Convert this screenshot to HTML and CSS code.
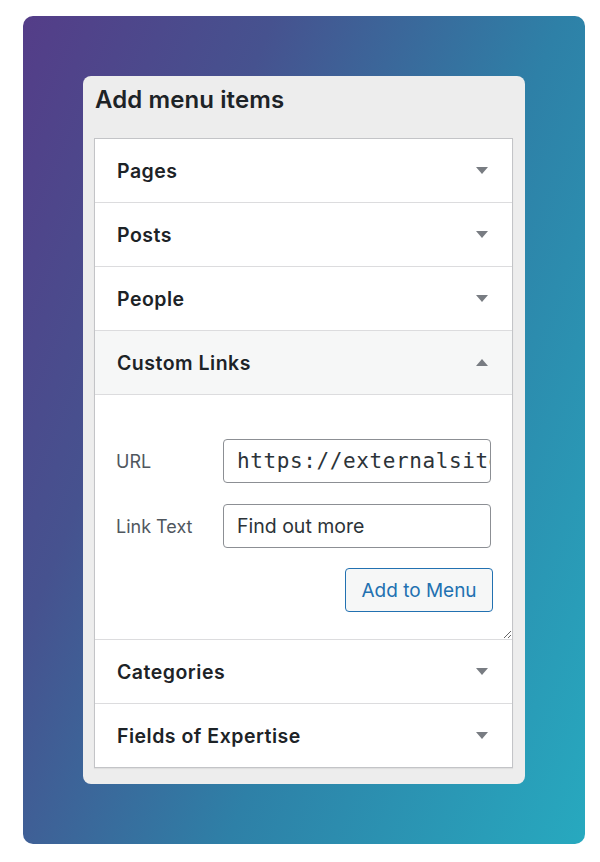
FILE: index.html
```html
<!DOCTYPE html>
<html lang="en">
<head>
<meta charset="utf-8">
<title>Add menu items</title>
<link rel="stylesheet" href="styles.css">
</head>
<body>
<div class="stage">
  <div class="panel">
    <h2 class="panel-title">Add menu items</h2>
    <div class="accordion">
      <div class="row">
        <span class="row-title">Pages</span>
        <svg class="arrow" width="12" height="7" viewBox="0 0 12 7"><polygon points="0,0 12,0 6,7"/></svg>
      </div>
      <div class="row">
        <span class="row-title">Posts</span>
        <svg class="arrow" width="12" height="7" viewBox="0 0 12 7"><polygon points="0,0 12,0 6,7"/></svg>
      </div>
      <div class="row">
        <span class="row-title">People</span>
        <svg class="arrow" width="12" height="7" viewBox="0 0 12 7"><polygon points="0,0 12,0 6,7"/></svg>
      </div>
      <div class="row row-open">
        <span class="row-title">Custom Links</span>
        <svg class="arrow" width="12" height="7" viewBox="0 0 12 7"><polygon points="0,7 12,7 6,0"/></svg>
      </div>
      <div class="custom">
        <div class="field">
          <label class="field-label">URL</label>
          <div class="input input-mono">https://externalsite.com</div>
        </div>
        <div class="field">
          <label class="field-label">Link Text</label>
          <div class="input">Find out more</div>
        </div>
        <div class="actions">
          <button class="button">Add to Menu</button>
        </div>
      </div>
      <div class="row">
        <span class="row-title">Categories</span>
        <svg class="arrow" width="12" height="7" viewBox="0 0 12 7"><polygon points="0,0 12,0 6,7"/></svg>
      </div>
      <div class="row row-last">
        <span class="row-title">Fields of Expertise</span>
        <svg class="arrow" width="12" height="7" viewBox="0 0 12 7"><polygon points="0,0 12,0 6,7"/></svg>
      </div>
    </div>
  </div>
</div>
</body>
</html>
```
FILE: styles.css
```css
html, body {
  margin: 0;
  padding: 0;
  background: #ffffff;
}

body {
  font-family: Inter, "Noto Sans", "Liberation Sans", sans-serif;
  color: #1d2327;
}

.stage {
  box-sizing: border-box;
  width: 562px;
  height: 828px;
  margin: 16px 0 0 23px;
  padding: 60px 60px 0 60px;
  border-radius: 10px;
  background: linear-gradient(112deg, #543d88 0%, #46528f 28%, #2e80a7 60%, #27a9bf 100%);
}

.panel {
  background: #ededed;
  border-radius: 8px;
  padding: 0 12px 16px 11px;
}

.panel-title {
  margin: 0;
  padding: 10px 0 24px 1px;
  font-size: 24px;
  line-height: 28px;
  font-weight: 600;
  color: #1d2327;
  letter-spacing: 0.1px;
}

.accordion {
  background: #ffffff;
  border: 1px solid #c3c4c7;
  box-shadow: 0 1px 1px rgba(0, 0, 0, 0.06);
}

.row {
  display: flex;
  align-items: center;
  justify-content: space-between;
  height: 63px;
  padding: 0 24px 0 22px;
  border-bottom: 1px solid #dcdcde;
}

.row-last {
  border-bottom: none;
}

.row-open {
  background: #f6f7f7;
}

.row-title {
  font-size: 19.5px;
  font-weight: 600;
  color: #1d2327;
  letter-spacing: 0.5px;
}

.arrow {
  fill: #787c82;
  display: block;
}

.custom {
  box-sizing: border-box;
  height: 245px;
  padding: 44px 21px 0 21px;
  border-bottom: 1px solid #dcdcde;
  display: flex;
  flex-direction: column;
  gap: 21px;
  resize: vertical;
  overflow: auto;
}

.field {
  display: flex;
  align-items: center;
}

.field-label {
  width: 107px;
  flex: none;
  font-size: 18px;
  color: #50575e;
}

.input {
  box-sizing: border-box;
  width: 268px;
  height: 44px;
  border: 1px solid #8c8f94;
  border-radius: 4px;
  padding: 0 13px;
  display: flex;
  align-items: center;
  overflow: hidden;
  white-space: nowrap;
  font-size: 19.5px;
  color: #2c3338;
}

.input-mono {
  font-family: "DejaVu Sans Mono", "Liberation Mono", monospace;
  font-size: 21px;
  letter-spacing: 0.6px;
}

.actions {
  display: flex;
  justify-content: flex-end;
  margin-top: -1px;
  margin-right: -2px;
}

.button {
  box-sizing: border-box;
  width: 148px;
  height: 44px;
  border: 1px solid #2271b1;
  border-radius: 4px;
  background: #f6f7f7;
  color: #2271b1;
  font-family: Inter, "Noto Sans", "Liberation Sans", sans-serif;
  font-size: 19px;
  padding: 0;
}
```
